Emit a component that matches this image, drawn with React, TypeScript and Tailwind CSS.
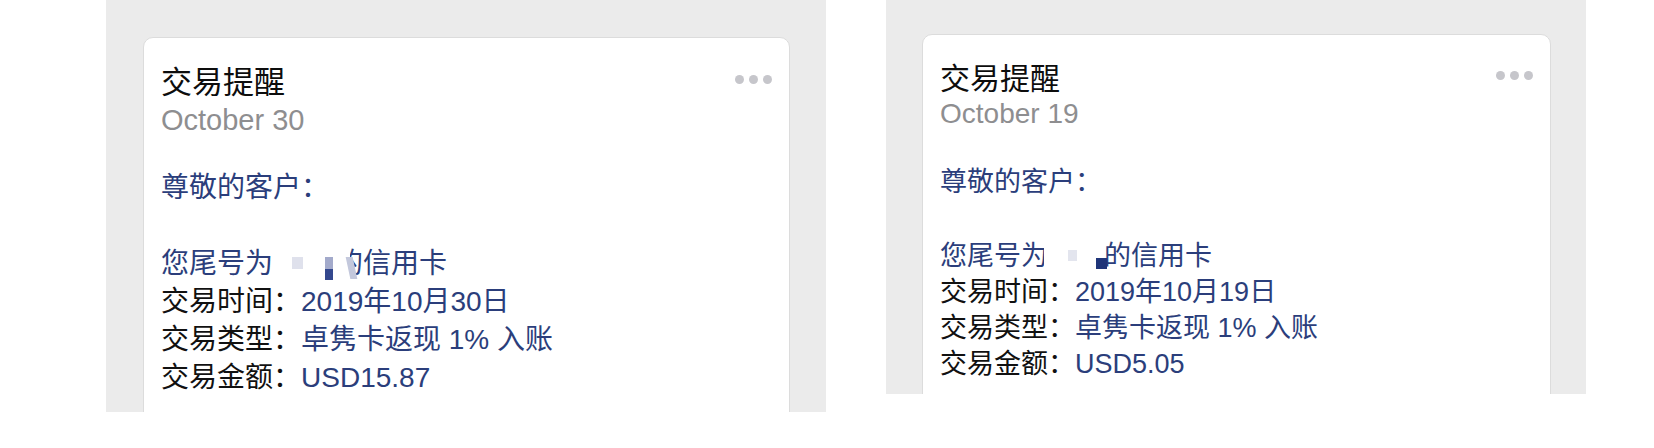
import React from "react";

const FONT = '"Liberation Sans", "Noto Sans CJK SC", sans-serif';

function Dots() {
  return (
    <div className="flex gap-[5px]">
      <span className="block h-[9px] w-[9px] rounded-full bg-[#c6c6cb]" />
      <span className="block h-[9px] w-[9px] rounded-full bg-[#c6c6cb]" />
      <span className="block h-[9px] w-[9px] rounded-full bg-[#c6c6cb]" />
    </div>
  );
}

function LeftCard() {
  return (
    <div className="h-[430px] w-[647px] shrink-0 rounded-[10px] border border-[#dcdcdc] bg-white pl-[17px] pr-[17px] pt-[28px]">
      <div className="flex items-start justify-between">
        <div className="text-[31px] leading-[34px] text-[#0d0d0d]">交易提醒</div>
        <div className="mt-[9px]"><Dots /></div>
      </div>
      <div className="mt-[3px] text-[29px] leading-[34px] text-[#8e8e90]">October 30</div>
      <div className="mt-[32px] text-[28px] leading-[38px] text-[#2b3e7b]">
        <div>尊敬的客户：</div>
        <div className="h-[38px]" />
        <div className="flex items-center">
          <span>您尾号为</span>
          <span className="relative block h-[38px] w-[62px]">
            <span className="absolute left-[19px] top-[12px] block h-[12px] w-[11px] bg-[#dfe1ec]" />
            <span className="absolute left-[52px] top-[12px] block h-[12px] w-[12px] bg-[#a3aacb]" />
            <span className="absolute left-[52px] top-[24px] block h-[11px] w-[12px] bg-[#34488e]" />
          </span>
          <span className="relative inline-block">
            的
            <span className="absolute left-[-2px] top-0 block h-full w-[17px] bg-white" />
            <span className="absolute left-[13px] top-[12px] block h-[22px] w-[7px] skew-x-12 bg-[#c3c8dc]" />
          </span>
          <span>信用卡</span>
        </div>
        <div><span className="text-[#111]">交易时间：</span>2019年10月30日</div>
        <div><span className="text-[#111]">交易类型：</span>卓隽卡返现 1% 入账</div>
        <div><span className="text-[#111]">交易金额：</span>USD15.87</div>
      </div>
    </div>
  );
}

function RightCard() {
  return (
    <div className="h-[420px] w-[629px] shrink-0 rounded-[10px] border border-[#dcdcdc] bg-white pl-[17px] pr-[17px] pt-[27px]">
      <div className="flex items-start justify-between">
        <div className="text-[30px] leading-[34px] text-[#0d0d0d]">交易提醒</div>
        <div className="mt-[9px]"><Dots /></div>
      </div>
      <div className="mt-[2px] text-[28px] leading-[32px] text-[#8e8e90]">October 19</div>
      <div className="mt-[34px] text-[27px] leading-[36px] text-[#2b3e7b]">
        <div>尊敬的客户：</div>
        <div className="h-[38px]" />
        <div className="flex items-center">
          <span>您尾号为</span>
          <span className="relative block h-[36px] w-[56px]">
            <span className="absolute left-[20px] top-[12px] block h-[11px] w-[9px] bg-[#e3e5ee]" />
            <span className="absolute left-[-4px] top-[4px] block h-[28px] w-[4px] bg-white" />
            <span className="absolute left-[48px] top-[20px] block h-[11px] w-[11px] bg-[#1f3579]" />
          </span>
          <span>的信用卡</span>
        </div>
        <div><span className="text-[#111]">交易时间：</span>2019年10月19日</div>
        <div><span className="text-[#111]">交易类型：</span>卓隽卡返现 1% 入账</div>
        <div><span className="text-[#111]">交易金额：</span>USD5.05</div>
      </div>
    </div>
  );
}

export default function App() {
  return (
    <div className="flex h-[448px] w-[1654px] items-start bg-white" style={{ fontFamily: FONT }}>
      <div className="ml-[106px] h-[412px] w-[720px] shrink-0 overflow-hidden bg-[#ebebeb] pl-[37px] pt-[37px]">
        <LeftCard />
      </div>
      <div className="ml-[60px] h-[394px] w-[700px] shrink-0 overflow-hidden bg-[#ebebeb] pl-[36px] pt-[34px]">
        <RightCard />
      </div>
    </div>
  );
}
